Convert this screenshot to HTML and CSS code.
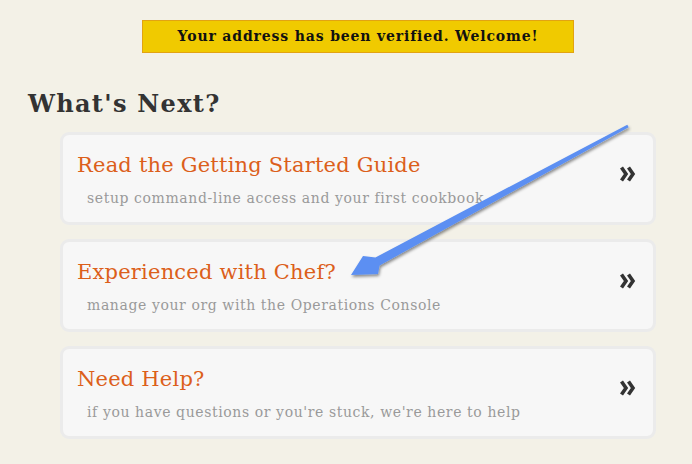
FILE: index.html
```html
<!DOCTYPE html>
<html>
<head>
<meta charset="utf-8">
<link rel="stylesheet" href="styles.css">
</head>
<body>
<div class="page">
  <div class="notice">Your address has been verified. Welcome!</div>
  <h1 class="heading">What's Next?</h1>
  <div class="cards">
    <a class="card" href="#">
      <div class="card-text">
        <div class="card-title">Read the Getting Started Guide</div>
        <div class="card-sub">setup command-line access and your first cookbook</div>
      </div>
      <svg class="chev" width="16" height="16" viewBox="0 0 16 16"><path d="M1.5 1.5 L6 8 L1.5 14.5 M8.5 1.5 L13 8 L8.5 14.5" fill="none" stroke="#333" stroke-width="3.6" stroke-linejoin="miter"/></svg>
    </a>
    <a class="card" href="#">
      <div class="card-text">
        <div class="card-title">Experienced with Chef?</div>
        <div class="card-sub">manage your org with the Operations Console</div>
      </div>
      <svg class="chev" width="16" height="16" viewBox="0 0 16 16"><path d="M1.5 1.5 L6 8 L1.5 14.5 M8.5 1.5 L13 8 L8.5 14.5" fill="none" stroke="#333" stroke-width="3.6" stroke-linejoin="miter"/></svg>
    </a>
    <a class="card" href="#">
      <div class="card-text">
        <div class="card-title">Need Help?</div>
        <div class="card-sub">if you have questions or you're stuck, we're here to help</div>
      </div>
      <svg class="chev" width="16" height="16" viewBox="0 0 16 16"><path d="M1.5 1.5 L6 8 L1.5 14.5 M8.5 1.5 L13 8 L8.5 14.5" fill="none" stroke="#333" stroke-width="3.6" stroke-linejoin="miter"/></svg>
    </a>
  </div>
  <svg class="arrow" width="692" height="464" viewBox="0 0 692 464">
    <defs>
      <filter id="sh" x="-10%" y="-10%" width="120%" height="120%">
        <feDropShadow dx="1" dy="2" stdDeviation="1.5" flood-color="#000" flood-opacity="0.45"/>
      </filter>
    </defs>
    <polygon filter="url(#sh)" fill="#5b8ff2" points="627.3,124.7 375.4,257.4 363,256 351,275 378,274 379.6,265.4 628.7,127.3"/>
  </svg>
</div>
</body>
</html>
```
FILE: styles.css
```css
html, body {
  margin: 0;
  padding: 0;
  background: #f3f1e7;
}
.page {
  position: relative;
  width: 692px;
  height: 464px;
  overflow: hidden;
  font-family: "DejaVu Serif", "Liberation Serif", serif;
}
.notice {
  margin: 20px 0 0 142px;
  width: 430px;
  height: 31px;
  box-sizing: content-box;
  background: #f0ca00;
  border: 1px solid #e2a312;
  color: #111;
  font-weight: bold;
  font-size: 14px;
  letter-spacing: 0.85px;
  line-height: 31px;
  text-align: center;
}
.heading {
  margin: 37px 0 0 28px;
  font-size: 24px;
  letter-spacing: 1.3px;
  line-height: 28px;
  font-weight: bold;
  color: #333;
}
.cards {
  margin: 14px 0 0 60px;
  width: 596px;
  display: flex;
  flex-direction: column;
  gap: 14px;
}
.card {
  display: flex;
  align-items: flex-start;
  height: 93px;
  box-sizing: border-box;
  border: 3px solid #ebebeb;
  border-radius: 9px;
  background: #f7f7f7;
  padding: 0 17px 0 14px;
  text-decoration: none;
}
.card-text {
  flex: 1;
  padding-top: 18px;
}
.card-title {
  color: #dc5f1b;
  font-size: 21px;
  letter-spacing: 0.2px;
  line-height: 24px;
}
.card-sub {
  margin: 12px 0 0 10px;
  color: #9a9a9a;
  font-size: 14px;
  letter-spacing: 0.6px;
  line-height: 18px;
}
.chev {
  display: block;
  flex: none;
  margin-top: 31px;
}
.arrow {
  position: absolute;
  left: 0;
  top: 0;
  pointer-events: none;
}
```
